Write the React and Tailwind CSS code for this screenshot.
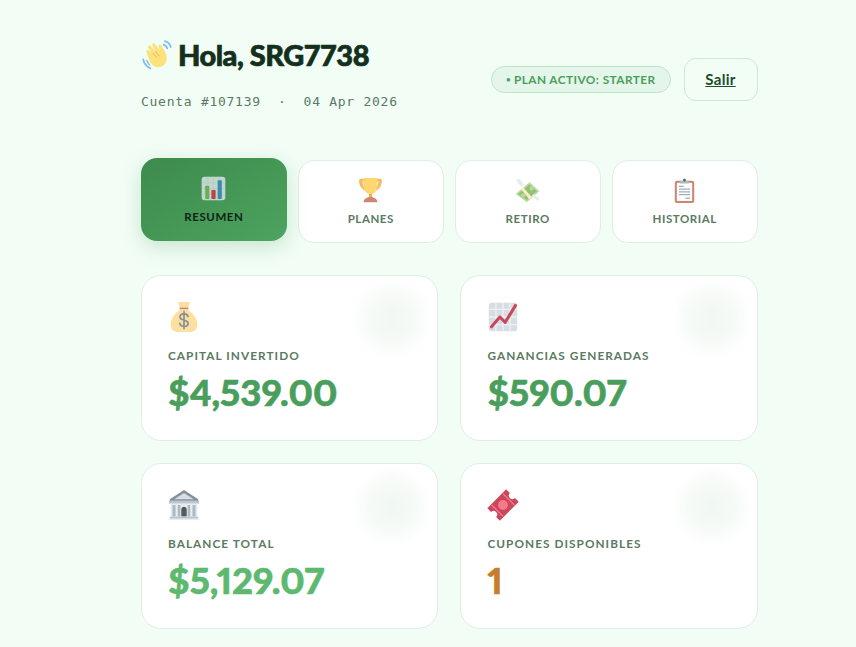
import React from "react";

// emoji drawings, 36x36 grid
const Wave = ({ className }) => (
  <svg viewBox="0 0 36 36" className={className}>
    <path d="M2.500 23c.8 4.500 3.500 8 8 10" fill="none" stroke="#5DADEC" strokeWidth="2" strokeLinecap="round" />
    <path d="M6.500 24c.5 2 1.500 3.500 3 5" fill="none" stroke="#5DADEC" strokeWidth="1.600" strokeLinecap="round" />
    <path d="M27 2.500c3.500 1 5.500 3.500 6.500 6.500M25.500 6.500c2 .5 3.500 2 4 4" fill="none" stroke="#5DADEC" strokeWidth="2" strokeLinecap="round" />
    <path d="M6 15c-1-1.500 1-3.500 2.500-2.500L13 16 8 10c-1.200-1.700 1.200-3.700 2.800-2.200l5.500 6.200L12.500 7c-1-1.800 1.700-3.300 3-1.600l5.800 7.600-1.500-4.500c-.8-1.900 1.900-3.100 3-1.300 2.200 3.300 4.700 7 5.700 10.800 1.500 5.700-.5 11.500-6 13.300-5 1.600-9-.5-12-4.500L6 15z" fill="#FFDC5D" />
    <path d="M13 16l5 5M16.300 14l4 5" stroke="#EF9645" strokeWidth="1" fill="none" strokeLinecap="round" />
  </svg>
);

const BarChart = ({ className }) => (
  <svg viewBox="0 0 36 36" className={className}>
    <rect x="1" y="1" width="34" height="34" rx="4" fill="#E1E8ED" />
    <path d="M1 10h34M1 18h34M1 26h34M10 1v34M18 1v34M26 1v34" stroke="#CCD6DD" strokeWidth="1" />
    <rect x="6" y="14" width="6" height="19" rx="1" fill="#77B255" />
    <rect x="15" y="20" width="6" height="13" rx="1" fill="#DD2E44" />
    <rect x="24" y="6" width="6" height="27" rx="1" fill="#3B88C3" />
  </svg>
);

const Trophy = ({ className }) => (
  <svg viewBox="0 0 36 36" className={className}>
    <path d="M4 1h8v3.500H6.500c0 6 2.500 10 6.500 11.500l-1 3C5 17 1.500 10 1.500 4c0-1.500 1-3 2.500-3zM32 1h-8v3.500h5.500c0 6-2.500 10-6.500 11.500l1 3c7-2 10.500-9 10.500-15 0-1.500-1-3-2.500-3z" fill="#F4A93D" />
    <path d="M8 0h20v11c0 7-4.500 11-8 12v5h-4v-5c-3.500-1-8-5-8-12V0z" fill="#FFCC4D" />
    <path d="M16 23h4v5h-4z" fill="#F19020" />
    <path d="M8 35c0-4 4-7.500 10-7.500s10 3.500 10 7.500H8z" fill="#C1694F" />
  </svg>
);

const Money = ({ className }) => (
  <svg viewBox="0 0 36 36" className={className}>
    <path d="M1 23L21 6l14 13-18 16z" fill="#A6D388" />
    <path d="M4.500 23.200L20.800 9.500l10.500 9.700L17 31.500z" fill="#77B255" />
    <circle cx="12" cy="25" r="3" fill="#A6D388" />
    <circle cx="24" cy="15" r="3" fill="#A6D388" />
    <path d="M11.500 13L24.500 28l-3.500 3L8.500 16z" fill="#FFE8B6" />
    <path d="M1 3l5-2 6.500 7.500-3.500 4.500zM24 26l3.500-3 7.500 7-2 3z" fill="#E1E8ED" />
  </svg>
);

const Clipboard = ({ className }) => (
  <svg viewBox="0 0 36 36" className={className}>
    <rect x="4" y="4" width="28" height="32" rx="3" fill="#C1694F" />
    <rect x="7" y="7" width="22" height="26" fill="#FFFFFF" />
    <path d="M12 4h12v4H12z" fill="#99AAB5" />
    <circle cx="18" cy="3" r="2" fill="#292F33" />
    <path d="M10 12h7M10 16h16M10 20h16M10 24h16M19 29h7" stroke="#8899A6" strokeWidth="1.600" />
  </svg>
);

const MoneyBag = ({ className }) => (
  <svg viewBox="0 0 36 36" className={className}>
    <path d="M11 1h14l-3 8h-8z" fill="#FDD888" />
    <path d="M13 7.500h10v2H13z" fill="#BF6952" />
    <path d="M14 9.500h8c6 3.500 11 11 11 17 0 6-4 8.500-8 8.500H11c-4 0-8-2.500-8-8.500 0-6 5-13.500 11-17z" fill="#FDD888" />
    <path d="M22.500 17.500c-.5-2-2.200-3-4.500-3s-4.500 1.300-4.500 3.500c0 4.800 9.200 2.500 9.200 7 0 2.200-2.200 3.500-4.700 3.500s-4.300-1.200-4.800-3.300M18 12v19" fill="none" stroke="#67757F" strokeWidth="1.900" strokeLinecap="round" />
  </svg>
);

const TrendChart = ({ className }) => (
  <svg viewBox="0 0 36 36" className={className}>
    <rect x="2" y="2" width="32" height="32" rx="3" fill="#CCD6DD" />
    <path d="M2 9.500h32M2 18h32M2 26.500h32M10 2v32M18 2v32M26 2v32" stroke="#E9EEF1" strokeWidth="1.500" />
    <path d="M5 29l9.500-11 6 6L32 5" fill="none" stroke="#BE1931" strokeWidth="3.400" strokeLinejoin="round" strokeLinecap="round" />
  </svg>
);

const Bank = ({ className }) => (
  <svg viewBox="0 0 36 36" className={className}>
    <path d="M18 1L2 11.500V14h32v-2.500z" fill="#66757F" />
    <path d="M18 4.500L7 11.500h22z" fill="#CCD6DD" />
    <path d="M1 13h34v3.500H1z" fill="#AAB8C2" />
    <path d="M3 16.500h30V31H3z" fill="#E1E8ED" />
    <path d="M5 18h3.500v13H5zM11 18h3v13h-3zM22 18h3v13h-3zM27.500 18H31v13h-3.500z" fill="#99AAB5" />
    <path d="M15 31v-8c0-4 6-4 6 0v8z" fill="#292F33" />
    <path d="M2 31h32v2.500H2z" fill="#AAB8C2" />
    <path d="M1 33.500h34V35H1z" fill="#E1E8ED" />
  </svg>
);

const Ticket = ({ className }) => (
  <svg viewBox="0 0 36 36" className={className}>
    <g transform="rotate(-45 18 18)">
      <path d="M3 8h30v6a4 4 0 0 0 0 8v6H3v-6a4 4 0 0 0 0-8z" fill="#BE1931" />
      <circle cx="18" cy="18" r="5.500" fill="#F4596E" />
      <path d="M9 9v18M27 9v18" stroke="#F4596E" strokeWidth="1.400" />
    </g>
  </svg>
);

const tabs = [
  { label: "RESUMEN", icon: BarChart, active: true },
  { label: "PLANES", icon: Trophy },
  { label: "RETIRO", icon: Money },
  { label: "HISTORIAL", icon: Clipboard },
];

const stats = [
  { label: "CAPITAL INVERTIDO", value: "$4,539.00", icon: MoneyBag, color: "text-[#4a9e5c]" },
  { label: "GANANCIAS GENERADAS", value: "$590.07", icon: TrendChart, color: "text-[#4a9e5c]" },
  { label: "BALANCE TOTAL", value: "$5,129.07", icon: Bank, color: "text-[#5cb96f]" },
  { label: "CUPONES DISPONIBLES", value: "1", icon: Ticket, color: "text-[#c47f2e]" },
];

const App = () => {
  return (
    <div className="h-[647px] overflow-hidden bg-[#f2fdf6] pl-[141px] pr-[98.5px] pt-[35px] font-['Lato',sans-serif]">
      {/* header */}
      <div className="flex items-start justify-between">
        <div>
          <div className="flex h-[40px] items-center gap-[5px]">
            <Wave className="h-[32px] w-[32px] opacity-80" />
            <h1 className="text-[29px] font-black tracking-[-0.5px] text-[#14301c] [-webkit-text-stroke:0.7px_#14301c]">Hola, SRG7738</h1>
          </div>
          <div className="mt-[17px] font-['DejaVu_Sans_Mono',monospace] text-[13px] leading-[20px] tracking-[0.73px] text-[#5a7a62]">
            Cuenta #107139 &nbsp;·&nbsp; 04 Apr 2026
          </div>
        </div>
        <div className="mt-[23px] flex items-center gap-[13px]">
          <span className="flex h-[27px] items-center gap-[3px] rounded-full border border-[#bfe3c8] bg-[#e4f6e9] px-[14px] text-[11.800px] font-bold tracking-[0.45px] text-[#4a9e5c]">
            <span className="text-[7px]">●</span> PLAN ACTIVO: STARTER
          </span>
          <button className="h-[43px] w-[74px] rounded-[12px] border border-[#cfe8d6] text-[15px] font-bold tracking-[0.3px] text-[#1e4d2b] underline">
            Salir
          </button>
        </div>
      </div>

      {/* tabs */}
      <div className="mt-[48px] grid grid-cols-4 gap-[11.200px]">
        {tabs.map((tab) => {
          const Icon = tab.icon;
          return tab.active ? (
            <div
              key={tab.label}
              className="flex h-[83px] -translate-y-[2px] flex-col items-center rounded-[16px] bg-gradient-to-br from-[#3d8b4d] to-[#4da35f] pt-[18px] shadow-[0_6px_20px_rgba(74,158,92,0.25)]"
            >
              <Icon className="h-[25px] w-[25px] opacity-80" />
              <span className="mt-[7px] text-[11.500px] font-bold leading-[17px] tracking-[0.55px] text-[#0f2415]">
                {tab.label}
              </span>
            </div>
          ) : (
            <div
              key={tab.label}
              className="flex h-[83px] flex-col items-center rounded-[16px] border border-[#deefe3] bg-white pt-[17px]"
            >
              <Icon className="h-[25px] w-[25px] opacity-80" />
              <span className="mt-[7px] text-[11.500px] font-bold leading-[17px] tracking-[0.55px] text-[#5a7a62]">
                {tab.label}
              </span>
            </div>
          );
        })}
      </div>

      {/* stat cards */}
      <div className="mt-[32px] grid grid-cols-2 gap-[22.400px]">
        {stats.map((stat) => {
          const Icon = stat.icon;
          return (
            <div
              key={stat.label}
              className="relative h-[166px] overflow-hidden rounded-[20px] border border-[#deefe3] bg-white px-[26px] pt-[25px]"
            >
              <div className="absolute right-[5px] top-[3px] h-[80px] w-[80px] rounded-full bg-[radial-gradient(circle,rgba(74,158,92,0.09),rgba(74,158,92,0.04)_50%,transparent_70%)] blur-[4px]" />
              <Icon className="h-[32px] w-[32px] opacity-80" />
              <div className="mt-[14px] text-[11.800px] font-bold leading-[17px] tracking-[1.05px] text-[#5a7a62]">
                {stat.label}
              </div>
              <div className={`mt-[3px] text-[36.500px] font-black leading-[50px] [font-variant-numeric:proportional-nums] [-webkit-text-stroke:0.6px_currentColor] ${stat.color}`}>
                {stat.value}
              </div>
            </div>
          );
        })}
      </div>
    </div>
  );
};

export default App;
